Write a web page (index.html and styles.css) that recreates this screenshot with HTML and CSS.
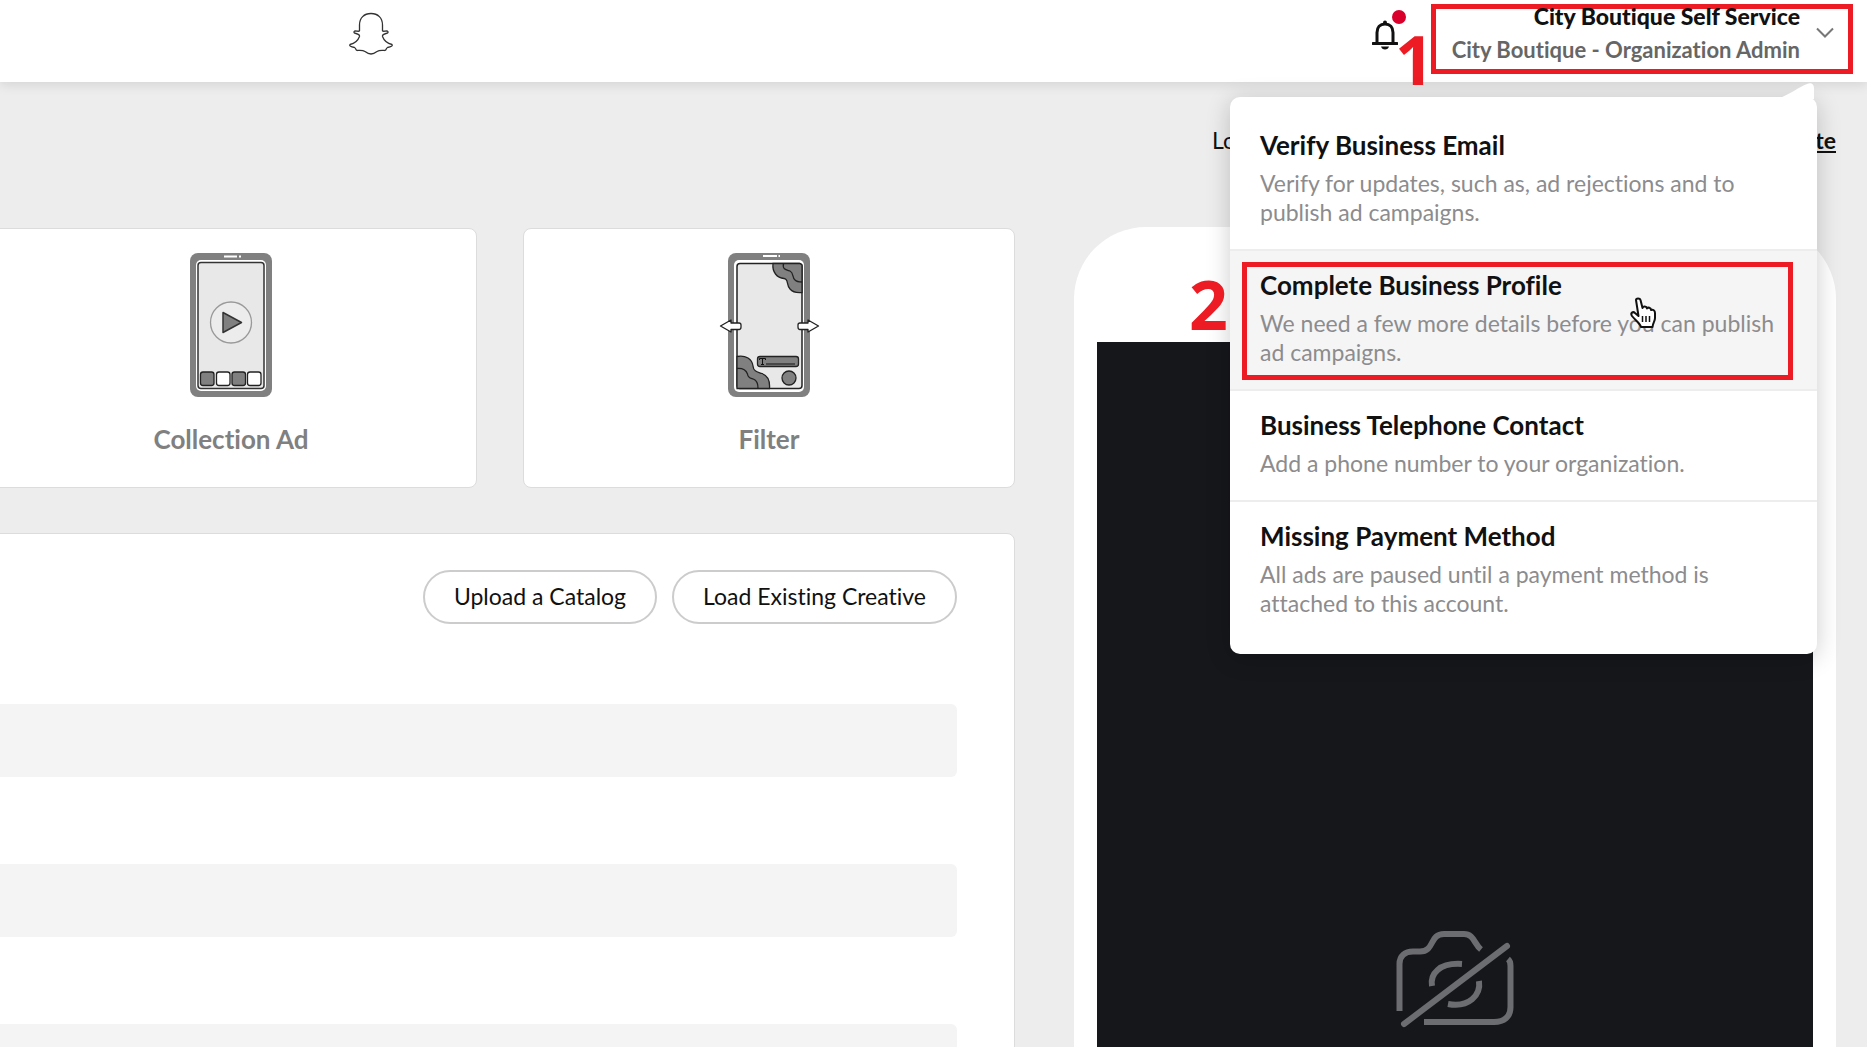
FILE: index.html
```html
<!DOCTYPE html>
<html lang="en">
<head>
    <meta charset="UTF-8">
    <meta name="viewport" content="width=device-width, initial-scale=1.0">
    <title>Ads Manager - Create Ad</title>
    <link rel="stylesheet" href="styles.css">
</head>
<body>

    <header class="topbar">
        <a href="#" class="logo" aria-label="Home">
            <svg width="46" height="44" viewBox="0 0 46 44" fill="#fff" stroke="#333" stroke-width="1.3" stroke-linejoin="round">
                <path d="M23 1.500C16 1.500 11.500 6 11.500 13V19C10 19.800 8 18.500 6.500 19.200C5.300 20.200 6 21 8 21.500C10.500 22.200 11.800 23 11.500 24.500C10 28.500 6.500 31.500 2 32.500C1 34 3 34.800 6.500 35.500C8 36 7.500 38 9 38.500C12 38.200 14.500 37.800 17 39.500C19 41 20.500 42 23 42C25.500 42 27 41 29 39.500C31.500 37.800 34 38.200 37 38.500C38.500 38 38 36 39.500 35.500C43 34.800 45 34 44 32.500C39.500 31.500 36 28.500 34.500 24.500C34.200 23 35.500 22.200 38 21.500C40 21 40.700 20.200 39.500 19.200C38 18.500 36 19.800 34.500 19V13C34.500 6 30 1.500 23 1.500Z"/>
            </svg>
        </a>

        <button class="bell" aria-label="Notifications">
            <svg width="26" height="30" viewBox="0 0 26 30">
                <path d="M5 23V12.500C5 7.500 8 4 13 4S21 7.500 21 12.500V23" fill="none" stroke="#111" stroke-width="3"/>
                <path d="M1 23.500H25" stroke="#111" stroke-width="3" stroke-linecap="round"/>
                <path d="M9 26.500H17C16.500 28.500 15 29.500 13 29.500S9.500 28.500 9 26.500Z" fill="#111"/>
                <circle cx="13" cy="2.500" r="2" fill="#111"/>
            </svg>
            <span class="bell-dot"></span>
        </button>

        <button class="account">
            <span class="account-text">
                <strong>City Boutique Self Service</strong>
                <span>City Boutique - Organization Admin</span>
            </span>
            <svg width="18" height="12" viewBox="0 0 18 12" fill="none" stroke="#777" stroke-width="2">
                <path d="M1 1.500L9 9.500L17 1.500"/>
            </svg>
        </button>
        <span class="step step-one">1</span>

        <nav class="menu">
            <svg class="menu-arrow" width="40" height="16" viewBox="0 0 40 16">
                <path d="M0 16C12 12 22 4 30 1C34 -1 37 1 37 5V16Z" fill="#fff"/>
            </svg>
            <a href="#" class="menu-item">
                <h3>Verify Business Email</h3>
                <p>Verify for updates, such as, ad rejections and to publish ad campaigns.</p>
            </a>
            <a href="#" class="menu-item active">
                <h3>Complete Business Profile</h3>
                <p>We need a few more details before you can publish ad campaigns.</p>
                <span class="highlight"></span>
                <span class="step step-two">2</span>
                <svg class="cursor" width="28" height="32" viewBox="0 0 28 32">
                    <path d="M7 3C7 1 11 1 11.500 3L13.500 11C14 9 17.500 9 18 11.500C19 10 22 10.500 22 13C24 12 26 13.500 26 16V21C26 24 24 25.500 23.500 30H12C11 26 6 23 3 19C1 16 4 14 6 16L9.500 19Z" fill="#fff" stroke="#111" stroke-width="2" stroke-linejoin="round"/>
                    <path d="M13.500 19V25M17 19V25M20.500 19V25" stroke="#111" stroke-width="1.500"/>
                </svg>
            </a>
            <a href="#" class="menu-item">
                <h3>Business Telephone Contact</h3>
                <p>Add a phone number to your organization.</p>
            </a>
            <a href="#" class="menu-item">
                <h3>Missing Payment Method</h3>
                <p>All ads are paused until a payment method is attached to this account.</p>
            </a>
        </nav>
    </header>

    <main class="content">
        <section class="builder">
            <div class="ad-types">
                <button class="card ad-type">
                    <svg width="104" height="144" viewBox="0 0 104 144">
                        <rect x="11" y="0" width="82" height="144" rx="8" fill="#808080"/>
                        <path d="M45 3.500H58M60 3.500H62" stroke="#fff" stroke-width="2"/>
                        <rect x="17" y="7" width="70" height="131" rx="5" fill="#fff"/>
                        <rect x="19" y="9.500" width="66" height="126" rx="3" fill="#e8e8e8" stroke="#333" stroke-width="1.500"/>
                        <circle cx="52" cy="69.500" r="20.500" fill="#ececec" stroke="#999" stroke-width="1.300"/>
                        <path d="M44 59.500V79.500L62.500 69.500Z" fill="#808080" stroke="#333" stroke-width="1.500" stroke-linejoin="round"/>
                        <g stroke="#222" stroke-width="1.300">
                            <rect x="21.500" y="119" width="13.500" height="13.500" rx="2.500" fill="#808080"/>
                            <rect x="37.500" y="119" width="13.500" height="13.500" rx="2.500" fill="#fff"/>
                            <rect x="53" y="119" width="13.500" height="13.500" rx="2.500" fill="#808080"/>
                            <rect x="68.500" y="119" width="13.500" height="13.500" rx="2.500" fill="#fff"/>
                        </g>
                    </svg>
                    <span>Collection Ad</span>
                </button>
                <button class="card ad-type">
                    <svg width="104" height="144" viewBox="0 0 104 144">
                        <rect x="11" y="0" width="82" height="144" rx="8" fill="#808080"/>
                        <path d="M46 3H60M61.500 3H63" stroke="#fff" stroke-width="2"/>
                        <rect x="17" y="7" width="70" height="132" rx="5" fill="#fff"/>
                        <rect x="20" y="10.500" width="65" height="125" rx="3" fill="#e8e8e8" stroke="#222" stroke-width="1.500"/>
                        <g fill="#808080" stroke="#222" stroke-width="1.300">
                            <path d="M56 10.500C55 19 60 25 67 25.500C72 26 69 32 73 36C76 39.500 80 40 85 39.500V12L83 10.500Z"/>
                            <path d="M66.500 10.500C65 17 70 17 73 18C77 20 75 25 78 27C80 29 82 29 85 29" fill="none"/>
                            <path d="M20 103.500C29 102 35 106 36 113C36.500 119 41 119 45 120.500C52 123 53 129 52.500 135.500H20Z"/>
                            <path d="M20 115.500C26 115 29 117 30.500 121C31 126 35 125 38 127C41 129 41 132 41 135.500" fill="none"/>
                            <rect x="40.500" y="103.500" width="41" height="10" rx="2.500"/>
                            <circle cx="72" cy="125" r="7"/>
                        </g>
                        <path d="M42.500 107V105.500H48.500V107M45.500 105.500V111.500M44 111.500H47M49 111H78" fill="none" stroke="#111"/>
                        <g fill="#fff" stroke="#222" stroke-width="1.300" stroke-linejoin="round">
                            <path d="M3.500 73L14 67V70H22Q24 70 24 72V74Q24 76.500 22 76.500H14V79Z"/>
                            <path d="M101.500 73L91 67V70H83Q81 70 81 72V74Q81 76.500 83 76.500H91V79Z"/>
                        </g>
                    </svg>
                    <span>Filter</span>
                </button>
            </div>

            <div class="card creative">
                <div class="creative-actions">
                    <button class="pill">Upload a Catalog</button>
                    <button class="pill">Load Existing Creative</button>
                </div>
                <input type="text" class="field" aria-label="Name">
                <input type="text" class="field" aria-label="Brand name">
                <input type="text" class="field" aria-label="Headline">
            </div>
        </section>

        <aside class="preview">
            <p class="preview-note">
                <span>Look</span>
                <a href="#">Create</a>
            </p>
            <div class="phone">
                <div class="phone-screen">
                    <svg width="120" height="98" viewBox="0 0 120 98" fill="none" stroke="#6c6d70" stroke-width="6">
                        <path d="M4.500 81V34C4.500 26 10 21.500 18 21.500H25C40 21.500 34 4 49 4H69C79 4 79 14 86 19.500"/>
                        <path d="M113 29C115.500 31 115.500 33 115.500 36V77C115.500 87 109 92 99 92H29"/>
                        <path d="M37 56C35 44 44 32.500 67 34"/>
                        <path d="M84 51C86 65 74 78 53 74"/>
                        <path d="M9 94L112 16" stroke-linecap="round"/>
                    </svg>
                </div>
            </div>
        </aside>
    </main>

</body>
</html>
```
FILE: styles.css
```css
* {
    box-sizing: border-box;
}

body {
    height: 100vh;
    margin: 0;
    overflow: hidden;
    background: #ededed;
    color: #111;
    font-family: Lato, "Open Sans", sans-serif;
    font-size: 23px;
    font-variant-ligatures: none;
}

h3, p {
    margin: 0;
}

a {
    color: inherit;
}

button {
    padding: 0;
    border: none;
    background: none;
    color: inherit;
    font: inherit;
    font-variant-ligatures: none;
    cursor: pointer;
}

svg {
    display: block;
}

.topbar {
    position: relative;
    z-index: 2;
    display: flex;
    align-items: flex-start;
    height: 82px;
    padding: 4px 14px 0 348px;
    background: #fff;
    box-shadow: 0 2px 12px rgba(0, 0, 0, 0.12);
}

.logo {
    margin: 8px auto 0 0;
}

.bell {
    position: relative;
    margin: 16px 33px 0 0;
}

.bell-dot {
    position: absolute;
    top: -10px;
    right: -8px;
    width: 14px;
    height: 14px;
    border-radius: 50%;
    background: #d9002b;
}

.account {
    display: flex;
    align-items: center;
    gap: 16px;
    height: 70px;
    padding: 0 14px 12px 16px;
    border: 5px solid #ed1c24;
}

.account-text {
    display: flex;
    flex-direction: column;
    text-align: right;
    line-height: 33px;
    color: #666;
    font-size: 22px;
    font-weight: 700;
}

.account-text strong {
    color: #111;
    font-size: 23px;
    font-weight: 900;
}

.step {
    position: absolute;
    color: #ed1c24;
    font-family: "Open Sans", sans-serif;
    font-size: 68px;
    font-weight: 700;
    line-height: 68px;
}

.step-one {
    top: 25px;
    right: 433px;
}

.step-two {
    top: 19px;
    left: -41px;
}

.menu {
    position: absolute;
    top: 97px;
    right: 50px;
    width: 587px;
    padding: 14px 0;
    border-radius: 10px;
    background: #fff;
    box-shadow: 0 4px 24px rgba(0, 0, 0, 0.2);
}

.menu-arrow {
    position: absolute;
    top: -14px;
    right: 0;
}

.menu-item {
    position: relative;
    display: block;
    padding: 18px 30px 22px;
    border-bottom: 2px solid #ededed;
    text-decoration: none;
}

.menu-item:last-child {
    border-bottom: none;
}

.menu-item.active {
    background: #f5f5f6;
}

.menu-item h3 {
    margin-bottom: 8px;
    font-size: 26px;
    font-weight: 700;
    line-height: 32px;
}

.menu-item p {
    color: #8c8c8e;
    line-height: 29px;
}

.highlight {
    position: absolute;
    inset: 11px 24px 9px 12px;
    border: 5px solid #ed1c24;
}

.cursor {
    position: absolute;
    top: 46px;
    right: 160px;
}

.content {
    display: grid;
    grid-template-columns: 1030fr 762fr;
    gap: 59px;
    margin-left: -15px;
    padding-right: 31px;
}

.builder {
    padding-top: 146px;
}

.card {
    border: 1px solid #dcdcdc;
    border-radius: 8px;
    background: #fff;
}

.ad-types {
    display: grid;
    grid-template-columns: 1fr 1fr;
    gap: 46px;
    margin-bottom: 45px;
}

.ad-type {
    display: flex;
    flex-direction: column;
    align-items: center;
    gap: 26px;
    height: 260px;
    padding-top: 24px;
    color: #808080;
    font-size: 26px;
    font-weight: 700;
    line-height: 32px;
}

.creative {
    display: flex;
    flex-direction: column;
    gap: 87px;
    padding: 36px 57px 60px 0;
}

.creative-actions {
    display: flex;
    justify-content: flex-end;
    gap: 15px;
    margin-bottom: -7px;
}

.pill {
    height: 54px;
    padding: 0 29px 3px;
    border: 2px solid #ccc;
    border-radius: 27px;
}

.field {
    width: 100%;
    height: 73px;
    border: none;
    border-radius: 6px;
    background: #f4f4f4;
    font: inherit;
}

.preview-note {
    display: flex;
    justify-content: space-between;
    padding: 42px 0 0 138px;
    line-height: 32px;
}

.preview-note a {
    font-weight: 700;
}

.phone {
    margin-top: 71px;
    padding: 115px 23px 0;
    border-radius: 72px 72px 0 0;
    background: #fff;
}

.phone-screen {
    display: flex;
    justify-content: center;
    height: 760px;
    padding-top: 588px;
    background: #16171b;
}
```
